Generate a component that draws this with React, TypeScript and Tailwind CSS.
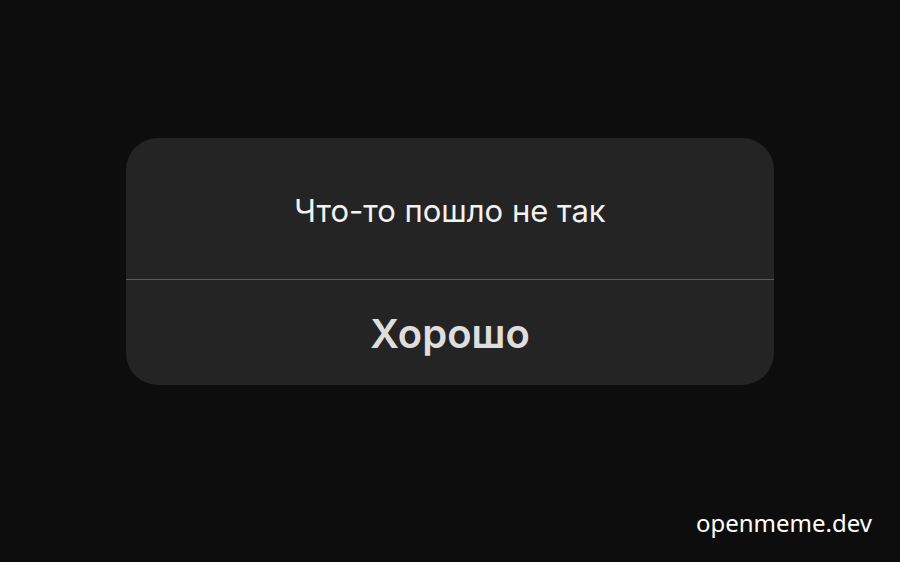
export default function App() {
  return (
    <div className="flex min-h-screen flex-col bg-[#0d0d0d] font-['Inter','Liberation_Sans',sans-serif]">
      <main className="flex flex-1 items-start justify-center pt-[138px]">
        <div
          role="alertdialog"
          aria-labelledby="alert-message"
          className="w-[72%] overflow-hidden rounded-[32px] bg-[#242424]"
        >
          <p id="alert-message" className="px-6 pt-[53px] pb-12 text-center text-[31px] leading-10 text-[#f2f2f2]">
            Что-то пошло не так
          </p>
          <button
            type="button"
            className="block w-full border-t border-[#5c5c5c] pt-[29px] pb-[27px] text-center text-[40px] leading-[49px] font-semibold text-[#dedede]"
          >
            Хорошо
          </button>
        </div>
      </main>
      <footer className="flex justify-end px-7 pb-[21px] font-['Noto_Sans',sans-serif] text-2xl leading-9 text-white">
        <a href="#">openmeme.dev</a>
      </footer>
    </div>
  );
}
